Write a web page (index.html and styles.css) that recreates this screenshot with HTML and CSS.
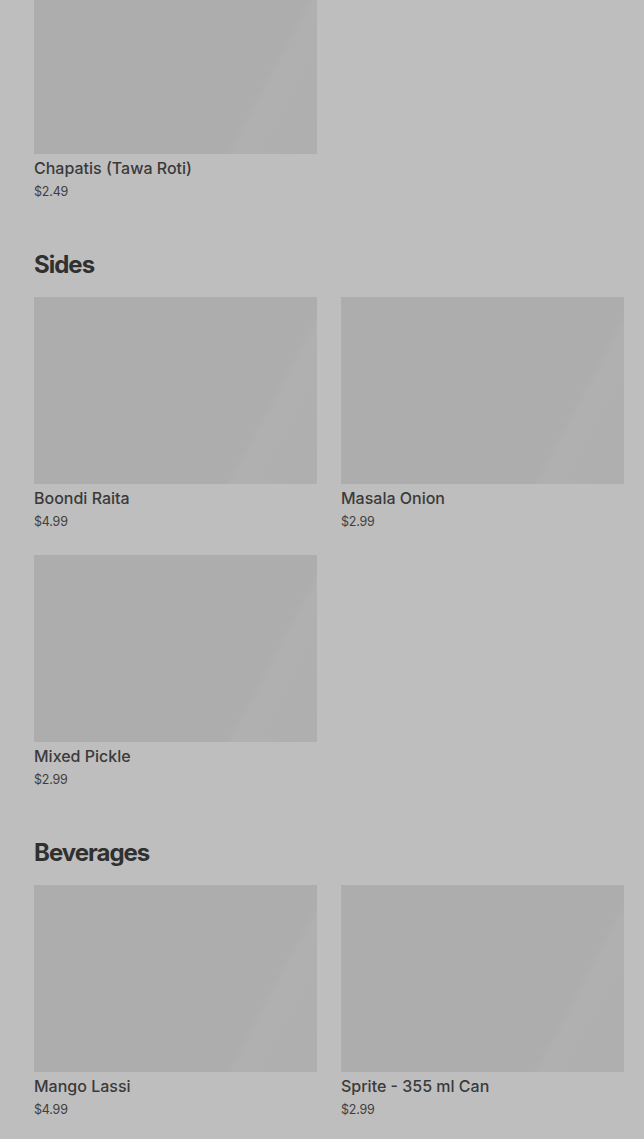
FILE: index.html
```html
<!DOCTYPE html>
<html lang="en">
<head>
  <meta charset="UTF-8">
  <title>Menu</title>
  <link rel="stylesheet" href="styles.css">
</head>
<body>

  <div class="menu">

    <div class="section first">
      <div class="grid">
        <div class="item">
          <div class="thumb"></div>
          <div class="name">Chapatis (Tawa Roti)</div>
          <div class="price">$2.49</div>
        </div>
      </div>
    </div>

    <div class="section">
      <h2>Sides</h2>
      <div class="grid">
        <div class="item">
          <div class="thumb"></div>
          <div class="name">Boondi Raita</div>
          <div class="price">$4.99</div>
        </div>
        <div class="item">
          <div class="thumb"></div>
          <div class="name">Masala Onion</div>
          <div class="price">$2.99</div>
        </div>
        <div class="item">
          <div class="thumb"></div>
          <div class="name">Mixed Pickle</div>
          <div class="price">$2.99</div>
        </div>
      </div>
    </div>

    <div class="section">
      <h2>Beverages</h2>
      <div class="grid">
        <div class="item">
          <div class="thumb"></div>
          <div class="name">Mango Lassi</div>
          <div class="price">$4.99</div>
        </div>
        <div class="item">
          <div class="thumb"></div>
          <div class="name">Sprite - 355 ml Can</div>
          <div class="price">$2.99</div>
        </div>
      </div>
    </div>

  </div>

</body>
</html>
```

FILE: styles.css
```css
body {
  margin: 0;
  background: #bebebe;
  font-family: Inter, "Noto Sans", sans-serif;
  color: #3a3a3a;
  overflow: hidden;
}
.menu {
  padding: 0 20px 0 34px;
  margin-top: -33px;
}
.section {
  margin-bottom: 48px;
}
h2 {
  margin: 0 0 16px;
  font-size: 24px;
  line-height: 32px;
  font-weight: 700;
  color: #303030;
  letter-spacing: -1px;
}
.grid {
  display: grid;
  grid-template-columns: 283px 283px;
  column-gap: 24px;
  row-gap: 24px;
}
.thumb {
  height: 187px;
  background: linear-gradient(118deg, #adadad 76%, #b0b0b0 78%, #afafaf 100%);
}
.name {
  margin-top: 4px;
  font-size: 16px;
  line-height: 20px;
  font-weight: 500;
  color: #3a3a3a;
}
.price {
  margin-top: 4px;
  font-size: 12.5px;
  line-height: 19px;
  color: #3e3e3e;
  letter-spacing: -0.2px;
}
```
